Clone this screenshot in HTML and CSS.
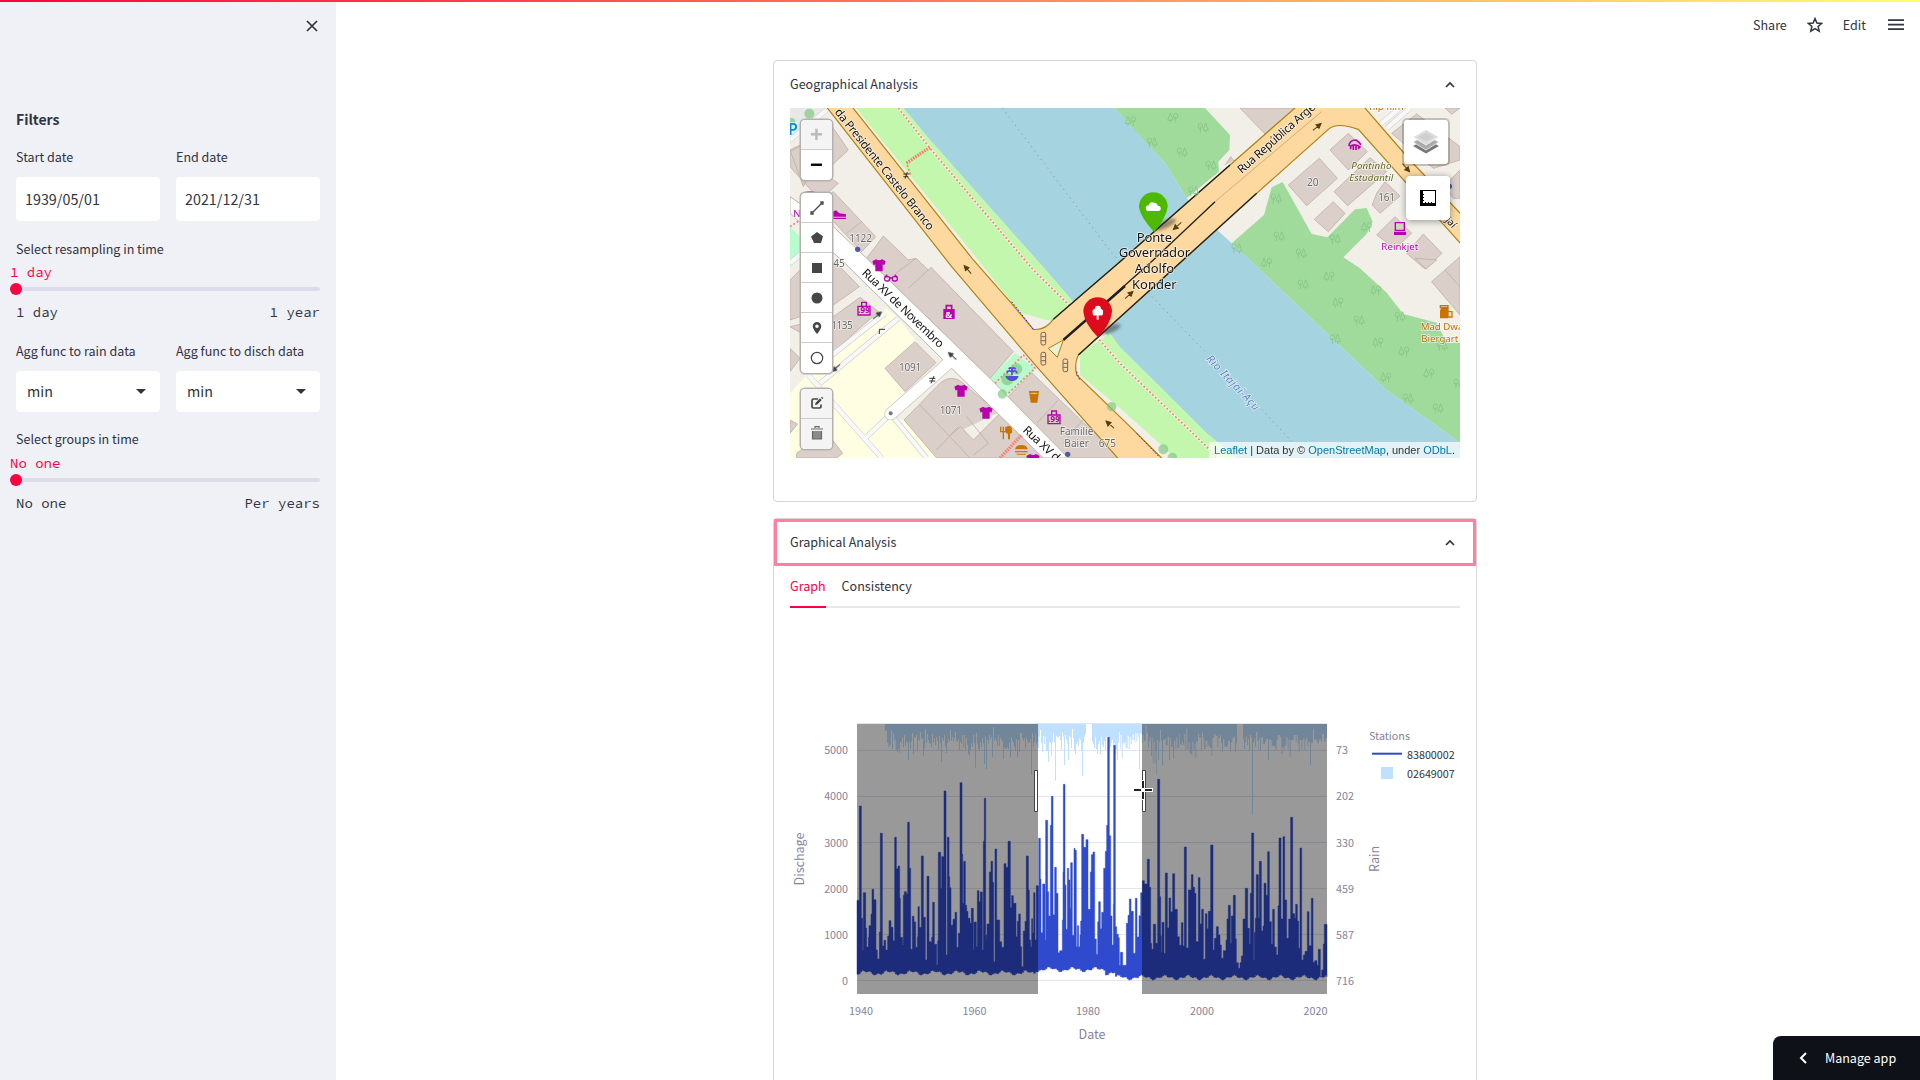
FILE: index.html
```html
<!DOCTYPE html>
<html lang="en">
<head>
<meta charset="utf-8">
<title>Hydrological analysis</title>
<link rel="stylesheet" href="styles.css">
</head>
<body>
<div class="topline"></div>
<div class="app">
  <aside class="sidebar">
    <div class="side-head"><svg width="14" height="14" viewBox="0 0 14 14"><path d="M2 2 12 12M12 2 2 12" stroke="#31333f" stroke-width="1.7"/></svg></div>
    <h3 class="filters">Filters</h3>
    <div class="pair">
      <div class="field"><label class="label">Start date</label><div class="input">1939/05/01</div></div>
      <div class="field"><label class="label">End date</label><div class="input">2021/12/31</div></div>
    </div>
    <div class="slider first">
      <label class="label">Select resampling in time</label>
      <div class="value">1 day</div>
      <div class="track"><i class="thumb"></i></div>
      <div class="ends"><span>1 day</span><span>1 year</span></div>
    </div>
    <div class="pair agg">
      <div class="field"><label class="label">Agg func to rain data</label><div class="select">min<i class="caret"></i></div></div>
      <div class="field"><label class="label">Agg func to disch data</label><div class="select">min<i class="caret"></i></div></div>
    </div>
    <div class="slider second">
      <label class="label">Select groups in time</label>
      <div class="value">No one</div>
      <div class="track"><i class="thumb"></i></div>
      <div class="ends"><span>No one</span><span>Per years</span></div>
    </div>
  </aside>

  <main class="main">
    <header class="toolbar">
      <span>Share</span>
      <svg class="star" width="16" height="16" viewBox="0 0 16 16"><path d="M8 1.6 9.9 6l4.8.4-3.6 3.1 1.1 4.7L8 11.7l-4.2 2.5 1.1-4.7L1.3 6.4 6.1 6Z" fill="none" stroke="#31333f" stroke-width="1.5"/></svg>
      <span class="edit">Edit</span>
      <svg class="burger" width="16" height="12" viewBox="0 0 16 12"><path d="M0 1.2H16M0 5.7H16M0 10.2H16" stroke="#31333f" stroke-width="1.7"/></svg>
    </header>

    <section class="card geo">
      <div class="card-head">Geographical Analysis<svg width="10" height="8" viewBox="0 0 10 8"><path d="M1 6 5 2 9 6" fill="none" stroke="#31333f" stroke-width="1.7"/></svg></div>
      <div class="map">
        <svg class="tiles" viewBox="60 174 2010 1050" width="670" height="350">
          <defs>
            <g id="trees" fill="none" stroke="#86c686" stroke-width="2.6"><ellipse cx="-8" cy="-6" rx="6.5" ry="8"/><path d="M-8-4V14M8-15 0 7H16ZM8 7V14"/></g>
            <g id="treesb"><use href="#trees" transform="scale(-1 1)"/></g>
            <path id="shirt" d="M-20-12-9-18Q0-12 9-18L20-12 16 0 11-3V18H-11V-3L-16 0Z" fill="#b900ad"/>
            <path id="arrow" d="M-16 0H8M16 0 2-7V7Z" stroke="#523f0a" stroke-width="3" fill="#523f0a"/>
            <g id="shop"><path d="M-18-6H18V20H-18ZM-7-6V-18H7V-6" fill="none" stroke="#b900ad" stroke-width="4"/><text x="-17" y="15" font-size="24" font-weight="700" fill="#b900ad">.99</text></g>
            <g id="signal" fill="none" stroke="#4b4b4b" stroke-width="2.4"><rect x="-7" y="-19" width="14" height="38" rx="5" fill="#fdd9a0"/><path d="M-6-6H6M-6 6H6"/></g>
          </defs>
          <rect x="60" y="174" width="2010" height="1050" fill="#f2efe9"/>
          <path fill="#e8e8e6" d="M60 174H172L120 230 60 280Z"/>
          <path fill="#a6d3e0" d="M400 174H1035L1190 345 1250 445 1345 543 1440 630 1850 1020 2070 1178V1224H1400L1310 1150 1050 892 907 752 827 660 480 270Z"/>
          <path fill="#a0db9c" d="M1035 174H1305L1380 255 1378 300 1345 335 1347 365 1250 445 1190 345 1080 225ZM1385 580 1482 495 1505 412 1538 396 1625 552 1672 562 1755 478 1790 474 1808 515 1790 552 1720 622 1770 655 1850 728 1900 792 2000 818 2030 878H2070V1178L1850 1020 1440 630Z"/>
          <path fill="#c3f7ad" d="M258 174H400L480 270 827 660 907 752 850 815 755 790 720 750 640 650ZM1020 850 1050 892 1310 1150 1400 1224H1215L1180 1190 1050 1075 930 975V910Z"/>
          <path fill="#fffee3" d="M350 775 385 805 440 875 345 955 405 1025 350 1095 400 1110 515 1224H60V1030L110 975 190 900Z"/>
          <path fill="#b8fbcc" d="M60 530 95 565V620L60 650ZM735 910 795 955 715 1035 660 985Z"/>
          <g fill="#dbd0c9" stroke="#c1b0a5" stroke-width="2.5">
            <path d="M60 305 190 235 235 300 160 370 205 400 150 450 60 350ZM60 300 190 235 100 410ZM190 425 317 560 275 605 140 460ZM230 550 275 515"/>
            <path d="M340 558 415 630 438 625 475 660 483 652 730 905 660 985 290 625ZM378 670 438 625M415 715 475 660"/>
            <path d="M60 690 100 650 200 640 268 710 190 765 60 810ZM190 800 270 742 325 785 190 905 60 830ZM60 895 90 925 60 965Z"/>
            <path d="M435 875 498 938 405 1025 345 955ZM402 1110 500 1010Q545 960 590 1010L850 1224H500ZM450 1065 600 1224M540 1157 572 1130 610 1170 700 1080M610 1215 655 1180M655 1180 590 1100M565 1130 500 1200"/>
            <path d="M785 968 940 1118 1065 1224H880L715 1040ZM800 1120 865 1050M880 1180 940 1108M60 1110 83 1122 60 1150ZM80 1210 165 1140 218 1210 200 1224H80Z"/>
            <path d="M1410 174H1575L1485 252ZM1735 250 1792 305 1735 360 1680 300ZM1648 325 1702 385 1610 467 1555 405ZM1800 323 1850 365 1733 467 1692 425ZM1845 395 1890 438 1830 490 1807 465 1820 430ZM1690 455 1725 490 1675 545 1633 508ZM1875 500 1925 550 1875 595 1820 555ZM1960 552 2016 610 1965 657 1910 610ZM1366 345 1382 320 1392 332"/>
            <path d="M1865 250 1940 192 2070 290V330L1990 355ZM2025 174H2070L2045 193ZM2020 410 2070 360V445H2050ZM1985 695 2070 620V795ZM1935 625 1968 657 2000 630ZM2025 660 2070 710"/>
          </g>
          <g fill="none" stroke-linejoin="round">
            <path d="M60 270 170 180M60 640 140 570M180 920 345 790M150 1000 385 805M115 975 335 1224M285 1165 362 1092 470 1224M1832 222 1890 174M1850 235 1920 174" stroke="#c9c9c9" stroke-width="16"/>
            <path d="M60 270 170 180M60 640 140 570M180 920 345 790M150 1000 385 805M115 975 335 1224M285 1165 362 1092 470 1224M1832 222 1890 174M1850 235 1920 174" stroke="#f8f8f8" stroke-width="13"/>
            <path d="M535 940 362 1092" stroke="#c9c3bd" stroke-width="38" stroke-linecap="round"/>
            <path d="M60 440 190 530 290 625 660 985 895 1224H820L545 955 225 640 60 490Z" fill="#fff" stroke="#bcb5ad" stroke-width="3"/>
            <path d="M535 940 362 1092" stroke="#fff" stroke-width="34" stroke-linecap="round"/>
            <path d="M385 174 480 295 790 660 907 775M980 860 1050 940 1310 1190 1340 1224" stroke="#ffffff" stroke-width="8" opacity=".6"/>
            <path d="M385 174 480 295 790 660 907 775M980 860 1050 940 1310 1190 1340 1224M675 1000 760 915 795 955 715 1030M60 530 90 510" stroke="#fa8072" stroke-width="5" stroke-dasharray="6 6"/>
            <path d="M690 1224 755 1155M480 292 408 340" stroke="#fa8072" stroke-width="10" stroke-dasharray="5 3"/>
            <path d="M412 345 422 375" stroke="#fa8072" stroke-width="5" stroke-dasharray="6 6"/>
            <path d="M697 174 1030 615 1070 655M1135 728 1310 910M1465 1067 1580 1190" stroke="#9a93c0" stroke-width="3" stroke-dasharray="4 12"/>
          </g>
          <path fill="#fdd9a0" stroke="#ac8110" stroke-width="3.5" d="M165 165 242 165 610 630 720 755 790 838Q825 842 850 808L1050 635 1380 345 1585 165H1777L1920 330 2080 500V590L1910 400 1765 238Q1700 215 1675 238L1460 430 925 915Q912 940 920 975L1080 1130 1185 1234H1052L800 950 545 650Z"/>
          <g fill="none" stroke="#202020">
            <path d="M850 808 1050 635 1380 345M925 915 1460 430" stroke-width="4"/>
            <path d="M880 870 1150 630M1150 630 1335 455" stroke-width="4"/><path d="M880 870 1065 708" stroke-width="7"/>
            <path d="M1335 455 1655 185" stroke="#b3996d" stroke-width="2"/>
            <path d="M725 755 790 838M920 965 930 993M1100 1150 1165 1218" stroke="#4a20d0" stroke-width="3" stroke-dasharray="5 5"/>
          </g>
          <path d="M880 870 862 922 835 895Z" fill="#e9f2d6" stroke="#ac8110" stroke-width="3"/>
          <g fill="#7bc67d" opacity=".65"><circle cx="118" cy="191" r="15"/><circle cx="64" cy="216" r="12"/><circle cx="740" cy="957" r="17"/><circle cx="712" cy="988" r="18"/><circle cx="697" cy="1032" r="14"/><circle cx="1025" cy="1070" r="14"/><circle cx="1180" cy="1198" r="15"/><circle cx="1207" cy="1222" r="14"/></g>
          <use href="#treesb" x="1082" y="214"/><use href="#treesb" x="1209" y="204"/><use href="#trees" x="1299" y="234"/><use href="#trees" x="1146" y="278"/><use href="#trees" x="1236" y="308"/><use href="#trees" x="1323" y="347"/><use href="#trees" x="1270" y="424"/><use href="#trees" x="1518" y="446"/><use href="#trees" x="1527" y="560"/><use href="#trees" x="1593" y="611"/><use href="#treesb" x="1790" y="532"/><use href="#trees" x="1695" y="568"/><use href="#treesb" x="1490" y="639"/><use href="#trees" x="1400" y="596"/>
          <use href="#trees" x="1599" y="704"/><use href="#treesb" x="1677" y="680"/><use href="#treesb" x="1704" y="758"/><use href="#trees" x="1767" y="812"/><use href="#treesb" x="1818" y="722"/><use href="#trees" x="1890" y="800"/><use href="#treesb" x="1824" y="878"/><use href="#trees" x="1695" y="868"/><use href="#treesb" x="1902" y="905"/><use href="#treesb" x="1848" y="983"/><use href="#treesb" x="1977" y="971"/><use href="#trees" x="1914" y="1046"/><use href="#trees" x="2004" y="1076"/><use href="#trees" x="2066" y="1001"/><use href="#trees" x="2016" y="888"/>
          <use href="#shirt" x="327" y="646"/><use href="#shirt" x="573" y="1022"/><use href="#shirt" x="648" y="1088"/><use href="#shirt" x="789" y="1230"/>
          <use href="#shop" x="282" y="775"/><use href="#shop" x="852" y="1101"/>
          <use href="#signal" x="820" y="866"/><use href="#signal" x="820" y="926"/><use href="#signal" x="886" y="946"/>
          <use href="#arrow" transform="translate(593 659) rotate(229)"/><use href="#arrow" transform="translate(1020 1124) rotate(222)"/><use href="#arrow" transform="translate(1077 735) rotate(-42)"/><use href="#arrow" transform="translate(1641 231) rotate(-40)"/><use href="#arrow" transform="translate(1222 528) rotate(138)"/><use href="#arrow" transform="translate(1908 353) rotate(48)"/>
          <g class="grey-arrows"><use href="#arrow" transform="translate(547 918) rotate(222)"/><use href="#arrow" transform="translate(322 796) rotate(-40)"/><use href="#arrow" transform="translate(198 954) rotate(140)"/></g>
          <path d="M328 838H345M328 838V852M478 985 496 985M478 993 496 993M483 1000 492 978M400 372H418M400 380H415M405 386 412 366" fill="none" stroke="#333" stroke-width="3"/>
          <g fill="#5158a8"><circle cx="263" cy="598" r="8"/><circle cx="893" cy="1213" r="8"/><circle cx="2038" cy="409" r="8"/></g><circle cx="362" cy="1090" r="6" fill="#777"/>
          <g fill="none" stroke="#b900ad" stroke-width="4"><rect x="344" y="680" width="15" height="13" rx="5"/><rect x="367" y="680" width="15" height="13" rx="5"/><path d="M344 682 352 674M382 682 374 674M359 684H367"/><path d="M1737 288Q1738 270 1758 270 1766 274 1773 284M1739 290Q1755 278 1772 292M1742 290V298M1750 287V300M1758 287V300M1766 290V298" stroke-width="5"/><path d="M1876 518H1903V541H1876Z"/></g>
          <path d="M1872 545H1908V555H1872ZM187 485 198 481 208 490 228 493V500H187ZM187 503H228V507H187ZM100 427Q120 420 140 427V435H100ZM520 777H554V807H520Z" fill="#b900ad"/>
          <path d="M529 777V767H545V777" stroke="#b900ad" stroke-width="5" fill="none"/>
          <text x="526" y="803" font-size="28" fill="#fff" font-weight="700">&amp;</text>
          <path d="M706 978H746Q742 993 727 993 711 993 706 978Z" fill="#5b49d8"/>
          <path d="M726 976V953M711 970Q713 958 725 965M741 970Q739 958 727 965M716 957Q724 950 726 958 728 950 737 957" stroke="#5b49d8" stroke-width="5" fill="none"/>
          <path d="M777 1023H807L802 1058H782ZM735 1198Q737 1185 754 1185 771 1185 773 1198ZM735 1203H773V1207H735ZM738 1211H770L765 1214H742ZM716 1128Q728 1128 726 1148L720 1152V1168H714V1152Q704 1148 706 1138 709 1128 716 1128ZM2014 770H2034V805H2010V782Z" fill="#cb7300"/>
          <path d="M782 1030H802" stroke="#dbd0c9" stroke-width="3"/>
          <path d="M692 1130V1145H708V1130M700 1130V1168M2036 785H2046V801H2036M2011 775V767H2034V803" stroke="#cb7300" stroke-width="4" fill="none"/>
          <g class="map-text">
            <g font-size="30" fill="#666"><text x="238" y="577" textLength="68">1122</text><text x="190" y="650">45</text><text x="184" y="836" textLength="64">1135</text><text x="387" y="963" textLength="67">1091</text><text x="509" y="1092" textLength="67">1071</text><text x="986" y="1190" textLength="52">675</text><text x="1611" y="408">20</text><text x="1825" y="454" textLength="50">161</text><text x="869" y="1156" textLength="101">Familie</text><text x="883" y="1192" textLength="74">Baier</text></g>
            <g font-size="29"><text x="1834" y="601" fill="#b900ad" textLength="111">Reinkjet</text><text x="70" y="500" fill="#b900ad">N</text><g fill="#c26a00"><text x="1952" y="840">Mad Dwa</text><text x="1954" y="876">Biergart</text><text x="1798" y="181">hip film</text></g><g fill="#5d6412" font-style="italic"><text x="1744" y="358" textLength="120">Pontinho</text><text x="1738" y="393" textLength="132">Estudantil</text></g></g>
            <g font-size="35" fill="#111">
              <text transform="translate(193 187) rotate(51.5)" textLength="455">da Presidente Castelo Branco</text>
              <text transform="translate(274 671) rotate(43.8)" textLength="324">Rua XV de Novembro</text>
              <text transform="translate(757 1143) rotate(43)" textLength="155">Rua XV de</text>
              <text transform="translate(1415 372) rotate(-41.5)" textLength="298">Rua República Arge</text>
              <text transform="translate(2025 512) rotate(48)" font-size="30">jaí</text>
              <g font-size="39" text-anchor="middle"><text x="1153" y="575" textLength="106">Ponte</text><text x="1153" y="622" textLength="214">Governador</text><text x="1153" y="669" textLength="118">Adolfo</text><text x="1153" y="716" textLength="134">Konder</text></g>
            </g>
            <text transform="translate(1307 928) rotate(46.5)" font-size="33" font-style="italic" fill="#5a7fc5" textLength="214">Rio Itajaí-Açu</text>
            <text x="54" y="255" font-size="48" font-weight="600" fill="#0092da">P</text>
          </g>
          <g><ellipse cx="1185" cy="524" rx="36" ry="11" transform="rotate(-25 1185 524)" fill="#333" opacity=".5" filter="blur(5px)"/><path d="M1107 470A43 43 0 1 1 1193 470Q1190 500 1153 546 1110 500 1107 470Z" fill="#4fb900"/><path d="M1130 482Q1122 468 1136 466 1140 452 1155 459 1163 460 1163 467 1174 467 1172 479L1167 483H1134Z" fill="#fff"/></g>
          <g><ellipse cx="1018" cy="838" rx="36" ry="11" transform="rotate(-20 1018 838)" fill="#333" opacity=".5" filter="blur(5px)"/><path d="M940 785A43 43 0 1 1 1026 785Q1023 820 984 862 943 820 940 785Z" fill="#dc0c1c"/><path d="M980 809V796Q967 799 968 788 965 779 974 777 975 767 984 767 993 767 993 777 1001 779 999 788 1000 799 986 796V809Z" fill="#fff"/></g>
        </svg>
        <div class="bar zoom"><b class="off">+</b><b>−</b></div>
        <div class="bar draw">
          <b><svg viewBox="0 0 14 14"><path d="M3 11 11 3M1 11H3V13H1ZM11 1H13V3H11Z" fill="none" stroke="#464646" stroke-width="1.3"/></svg></b>
          <b><svg viewBox="0 0 14 14"><path d="M7 1 13 5.2 11 12H4L1 5.5Z" fill="#464646"/></svg></b>
          <b><svg viewBox="0 0 14 14"><path d="M2 2H12V12H2Z" fill="#464646"/></svg></b>
          <b><svg viewBox="0 0 14 14"><circle cx="7" cy="7" r="5.5" fill="#464646"/></svg></b>
          <b><svg viewBox="0 0 14 14"><path d="M7 1A4.3 4.3 0 0 1 11.3 5.3Q11 8.5 7 13 3 8.500 2.700 5.300A4.300 4.300 0 0 1 7 1ZM7 3.500A1.800 1.800 0 1 0 7 7.100 1.800 1.800 0 0 0 7 3.500Z" fill="#464646" fill-rule="evenodd"/></svg></b>
          <b><svg viewBox="0 0 14 14"><circle cx="7" cy="7" r="5.700" fill="none" stroke="#464646" stroke-width="1.200"/></svg></b>
        </div>
        <div class="bar modify">
          <b class="off"><svg viewBox="0 0 14 14"><path d="M8 3H3.500Q2 3 2 4.500V10.500Q2 12 3.500 12H9.500Q11 12 11 10.500V8.500" fill="none" stroke="#464646" stroke-width="1.700"/><path d="M5 9 5.600 6.700 10 2.300 11.700 4 7.300 8.400ZM11 1.500 12 .7 13.300 2 12.500 3Z" fill="#464646"/></svg></b>
          <b class="off"><svg viewBox="0 0 14 14"><path d="M2.500 5H11.500V13H2.500Z" fill="#8b8b8b"/><path d="M1 3H13M5 2V.7H9V2M2.500 5V13H11.500V5" fill="none" stroke="#666" stroke-width="1.200"/></svg></b>
        </div>
        <div class="layers"><svg width="28" height="28" viewBox="0 0 28 28"><path d="M1 18 14 11 27 18 14 25.500Z" fill="#777"/><path d="M1 14 14 7 27 14 14 22Z" fill="#aaa" stroke="#fff" stroke-width=".7"/><path d="M1 9 14 1.500 27 9 14 17Z" fill="#ddd" stroke="#fff" stroke-width=".7"/><path d="M6 9 14 4.500 22 9 14 13.500Z" fill="#cfcfcf"/></svg></div>
        <div class="measure"><svg width="16" height="16" viewBox="0 0 16 16"><path d="M0 0H3V13H16V16H0Z" fill="#000"/><path d="M3 .5H16M15.500 1V13M5.500 12V13M8.500 12V13M11.500 12V13M3 4.500H4M3 7.500H4M3 10.500H4" fill="none" stroke="#000"/></svg></div>
        <div class="credit"><a>Leaflet</a> | Data by © <a>OpenStreetMap</a>, under <a>ODbL</a>.</div>
      </div>
    </section>

    <section class="card graph">
      <div class="card-head focus">Graphical Analysis<svg width="10" height="8" viewBox="0 0 10 8"><path d="M1 6 5 2 9 6" fill="none" stroke="#31333f" stroke-width="1.700"/></svg></div>
      <nav class="tabs"><span class="active">Graph</span><span>Consistency</span></nav>
      <svg class="chart" viewBox="790 700 670 360" width="670" height="360">
        <path d="M857 723.500H1327M857 750.500H1327M857 796.500H1327M857 842.500H1327M857 888.500H1327M857 934.500H1327M857 980.500H1327" stroke="#e3e5f0"/>
        <g transform="translate(780 710) scale(.33333)">
          <path id="rain" fill="#bfe0ff"/>
          <path id="flow" fill="#2f4acd" stroke="#2f4acd" stroke-opacity=".5" stroke-width="3"/>
        </g>
        <path d="M857 724H1038V994H857ZM1142 724H1327V994H1142Z" fill="#000" fill-opacity=".4"/>
        <path d="M1034.500 770.500H1037.500V811.500H1034.500ZM1142.500 770.500H1145.500V811.500H1142.500Z" fill="#fff" stroke="#444"/>
        <path d="M1133 790H1153M1143 780V800" stroke="#fff" stroke-width="4"/><path d="M1134 790H1141M1145 790H1152M1143 781V788M1143 792V799" stroke="#222" stroke-width="2"/>
        <g class="axis" text-anchor="end"><text x="848" y="754">5000</text><text x="848" y="800">4000</text><text x="848" y="846.500">3000</text><text x="848" y="892.500">2000</text><text x="848" y="938.500">1000</text><text x="848" y="984.500">0</text></g>
        <g class="axis"><text x="1336" y="754">73</text><text x="1336" y="800">202</text><text x="1336" y="846.500">330</text><text x="1336" y="892.500">459</text><text x="1336" y="938.500">587</text><text x="1336" y="984.500">716</text></g>
        <g class="axis" text-anchor="middle"><text x="861" y="1015">1940</text><text x="974.500" y="1015">1960</text><text x="1088" y="1015">1980</text><text x="1202" y="1015">2000</text><text x="1315.500" y="1015">2020</text></g>
        <g class="title" text-anchor="middle"><text x="1092" y="1039">Date</text><text transform="translate(804 859) rotate(-90)">Dischage</text><text transform="translate(1379 859) rotate(-90)">Rain</text></g>
        <text class="axis" x="1369" y="740">Stations</text>
        <path d="M1372 753.700H1402" stroke="#2f4acd" stroke-width="2"/><path d="M1381 767H1393V779H1381Z" fill="#bfe0ff"/>
        <g class="legend"><text x="1407" y="759">83800002</text><text x="1407" y="778">02649007</text></g>
      </svg>
    </section>
  </main>
</div>
<div class="manage"><svg width="8" height="12" viewBox="0 0 8 12"><path d="M7 1 2 6 7 11" fill="none" stroke="#fff" stroke-width="2"/></svg>Manage app</div>
<script src="script.js"></script>
</body>
</html>
```

FILE: styles.css
```css
* { box-sizing: border-box; }
body {
  margin: 0;
  height: 1080px;
  overflow: hidden;
  background: #fff;
  color: #31333f;
  /* The Latin glyphs of this family are about 1.117 times wider per em than those of Source Sans. */
  font-family: "Source Sans Pro", "Noto Sans CJK JP", "Noto Sans", sans-serif;
  font-size: 12.54px;
  line-height: 20px;
}
.topline { position: absolute; inset: 0 0 auto; height: 2px; background: linear-gradient(90deg, #ff0040, #fcff70); z-index: 2; }
.app { display: flex; height: 1080px; }

.sidebar { flex: 0 0 336px; background: #f0f1f6; padding: 0 16px; }
.side-head { display: flex; justify-content: flex-end; padding: 19px 1px 0 0; height: 109px; }
.filters { margin: 0; font-size: 14px; font-weight: 700; line-height: 20px; height: 38px; }
.pair { display: grid; grid-template-columns: 1fr 1fr; gap: 16px; }
.label { display: block; height: 20px; white-space: nowrap; }
.input, .select { background: #fff; border-radius: 4px; font-size: 14.33px; display: flex; align-items: center; }
.input { height: 44px; margin-top: 10px; padding: 0 9px 1px; }
.agg { padding-top: 19px; }
.select { height: 41px; margin-top: 10px; padding: 0 14px 1px 11px; justify-content: space-between; }
.caret { border: 5px solid transparent; border-top: 5px solid #31333f; border-bottom: 0; }
.slider.first { padding-top: 18px; }
.slider.second { padding-top: 17px; }
.value, .ends { font-family: "Source Code Pro", "Liberation Mono", monospace; font-size: 14px; height: 20px; }
.value { color: #ff0040; margin: 3px 0 0 -6px; }
.second .value { margin-top: 4px; }
.track { height: 4px; margin-top: 5px; background: #dadcea; border-radius: 2px; display: flex; align-items: center; }
.thumb { width: 12px; height: 12px; margin-left: -6px; border-radius: 50%; background: #ff0040; }
.ends { display: flex; justify-content: space-between; margin-top: 11px; }

.main { flex: 1; display: flex; flex-direction: column; align-items: center; padding-right: 6px; }
.toolbar { align-self: stretch; height: 60px; flex: none; display: flex; align-items: flex-start; justify-content: flex-end; padding: 15px 10px 0 0; }
.star { margin: 2px 20px 0 20px; }
.edit { margin-right: 22px; }
.burger { margin-top: 4px; }
.card { width: 704px; flex: none; border: 1px solid #d6d6d9; border-radius: 4px; }
.card-head { display: flex; justify-content: space-between; align-items: center; height: 47px; padding: 0 21px 1px 16px; }
.card-head svg { margin-top: 1px; }
.geo { height: 442px; }
.graph { margin-top: 16px; height: 600px; }
.focus { border: 3px solid #ff809f; padding: 0 18px 1px 13px; }
.tabs { display: flex; gap: 16px; margin: 0 16px; height: 42px; box-shadow: inset 0 -2px #e8e8ea; }
.tabs span { height: 42px; padding-top: 10px; }
.tabs .active { color: #ff0040; border-bottom: 2px solid #ff0040; }
.chart { display: block; margin: 92px 0 0 16px; }
.axis { font-size: 10.75px; fill: #85839a; }
.title { font-size: 12.54px; fill: #85839a; }
.legend { font-size: 10.75px; fill: #31333f; }

.map { position: relative; width: 670px; height: 350px; margin-left: 16px; overflow: hidden; }
.tiles { display: block; font-family: "Noto Sans", sans-serif; }
.map-text text { paint-order: stroke; stroke: rgba(255, 255, 255, .75); stroke-width: 4px; }
.grey-arrows { filter: grayscale(1); }
.bar { position: absolute; left: 11px; width: 31px; border-radius: 4px; box-shadow: 0 0 0 1.5px #b3b0ad; background: #fff; overflow: hidden; }
.bar b { display: flex; align-items: center; justify-content: center; height: 30px; border-bottom: 1px solid #ccc; font: 700 22px "Liberation Sans", sans-serif; color: #000; }
.bar b:last-child { border-bottom: 0; }
.bar b.off { background: #f4f4f4; color: #bbb; }
.bar svg { width: 14px; height: 14px; }
.zoom { top: 12px; }
.draw { top: 85px; }
.modify { top: 281px; }
.modify svg { margin-bottom: 2px; }
.layers, .measure { position: absolute; display: flex; align-items: center; justify-content: center; background: #fff; }
.layers { left: 612px; top: 10px; width: 48px; height: 48px; border: 2px solid rgba(0, 0, 0, .2); border-radius: 5px; background-clip: padding-box; }
.measure { left: 616px; top: 68px; width: 44px; height: 44px; border-radius: 4px; box-shadow: 0 1px 7px rgba(0, 0, 0, .4); }
.credit { position: absolute; right: 0; bottom: 0; height: 16px; padding: 0 5px; background: rgba(255, 255, 255, .7); font: 11px/16px "Liberation Sans", sans-serif; color: #333; white-space: nowrap; }
.credit a { color: #0078a8; }

.manage { position: absolute; right: 0; bottom: 0; width: 147px; height: 44px; display: flex; align-items: center; gap: 18px; padding-left: 26px; background: #0e1117; color: #fff; border-radius: 8px 0 0 0; font-size: 12.54px; }
```

FILE: script.js
```js
// Step series as x, y pairs; both halves share one grid, the second starts 1020 units further right.
const rainA = [315,62,321,98,325,110,329,104,333,62,336,116,339,70,342,92,345,88,347,122,351,126,354,116,357,128,360,96,363,100,366,84,369,112,372,75,375,108,378,94,381,98,384,150,387,95,390,118,393,95,396,70,399,132,402,82,408,75,411,124,414,88,417,92,420,66,423,88,426,84,429,137,432,116,435,58,438,98,441,72,444,90,447,98,450,102,453,110,456,72,459,98,462,85,465,106,468,80,471,92,474,122,477,78,480,100,483,156,486,85,489,92,492,75,495,110,498,129,501,100,504,86,507,94,510,60,513,92,516,80,519,94,522,85,525,66,528,92,531,96,534,88,537,120,540,95,543,102,546,75,549,112,552,75,555,120,558,84,561,104,564,132,567,137,570,120,573,100,576,110,579,75,582,100,585,173,588,68,591,100,594,117,597,124,600,96,603,112,606,84,609,100,612,162,615,80,618,177,621,90,624,100,627,75,630,88,633,80,636,140,639,52,642,92,645,85,648,92,651,108,654,75,657,108,660,84,663,90,666,95,669,147,672,112,675,116,681,112,684,118,687,98,690,142,693,82,696,92,699,98,702,110,705,124,708,88,711,142,714,90,717,126,720,68,726,85,729,92,732,85,735,116,738,85,741,92,744,98,750,88,753,194,756,70,759,112,762,96,765,72,768,104,771,96,774,114,777,80,780,60,783,98,786,125,789,78,792,102,795,80,798,123,804,155,807,95,810,98,813,137,816,95,819,68,822,98,825,212,828,78,831,82,837,78,840,90,843,120,846,68,849,80,852,165,855,75,858,88,861,102,864,150,867,78,870,82,873,114,876,56,879,84,882,122,885,132,888,102,891,96,894,108,897,85,900,90,903,124,906,197,909,98,912,80,915,72,918,42,936,95,939,103,942,114,945,80,948,118,951,132,954,102,957,92,960,134,963,80,966,105,969,112,972,94,975,120,978,80,984,90,987,122,990,110,993,98,996,90,999,104,1002,100,1005,130,1008,118,1011,150,1014,98,1017,66,1020,118];
const rainB = [2,75,5,143,8,98,11,102,14,96,17,115,23,78,26,117,29,82,32,102,35,90,38,72,41,90,44,98,46,70,49,95,52,70,55,82,57,176,60,70,65,100,68,75,71,92,77,46,80,70,84,113,87,92,90,82,93,137,96,85,98,160,101,95,104,162,107,120,109,195,111,90,114,150,117,95,120,60,123,92,126,167,129,90,134,85,137,106,143,80,147,150,150,84,153,110,159,146,162,92,166,118,169,82,172,114,178,72,180,104,186,95,189,106,193,72,196,120,199,55,202,118,206,98,209,130,214,136,217,95,220,122,224,100,226,145,229,95,234,72,237,82,243,122,246,68,249,85,252,118,257,92,262,110,265,104,268,112,274,137,277,84,282,72,286,78,292,112,295,85,300,75,303,100,306,126,309,88,313,110,319,112,322,104,325,92,330,126,333,98,337,85,340,80,345,127,348,100,351,42,369,88,372,118,375,96,378,80,381,105,384,88,387,122,390,75,393,82,396,312,399,98,402,86,405,110,408,65,412,92,415,120,417,85,420,122,423,82,429,102,435,95,438,86,444,150,447,88,450,90,455,108,464,110,467,120,470,90,473,75,479,82,484,132,487,112,491,124,494,106,499,82,503,118,506,88,509,142,512,90,521,75,527,95,530,75,533,100,536,125,539,90,544,118,547,90,550,85,553,120,556,90,559,82,562,108,565,96,570,165,573,98,579,58,582,88,588,92,592,100,597,88,603,95,606,72,612,94,617,84,621,42];
const flowA = [231,571,238,288,244,625,248,720,250,548,257,654,260,711,265,682,267,647,273,612,276,538,281,569,288,720,292,747,298,666,301,370,307,708,312,691,317,720,323,678,327,632,333,652,339,692,344,382,349,476,354,468,359,565,361,682,368,705,370,556,373,545,379,552,383,337,388,475,392,718,397,619,402,636,407,712,412,680,414,590,418,652,424,438,430,622,436,750,441,499,447,695,453,697,455,682,458,577,463,703,470,765,473,692,475,427,482,535,485,440,492,243,498,735,502,382,507,500,509,533,513,646,519,628,525,607,530,712,535,670,540,218,546,432,548,580,551,454,556,586,560,604,564,625,570,640,574,595,580,720,582,636,589,710,592,542,597,575,601,546,607,720,610,394,613,265,617,675,620,690,621,642,628,486,633,454,638,517,641,755,645,417,650,630,659,695,665,712,672,461,678,472,684,394,691,593,695,557,700,580,708,680,712,634,716,612,721,710,725,770,730,663,735,634,739,438,745,540,748,690,752,710,755,626,758,668,761,548,765,690,769,527,776,385,781,507,783,668,788,522,795,690,797,331,803,545,806,618,811,346,814,259,819,614,824,472,829,550,834,728,839,722,847,630,849,485,850,223,855,525,858,658,862,475,866,510,870,595,872,458,877,676,882,415,885,421,889,710,892,647,896,710,900,675,902,633,905,373,911,412,918,389,924,598,931,486,934,434,939,426,944,687,949,733,953,635,956,575,961,656,965,607,971,475,976,424,980,346,983,82,988,377,992,618,996,705,1000,583,1001,106,1006,650,1010,673,1015,683,1018,766];
const flowB = [1,727,8,766,19,640,24,616,28,567,33,604,40,730,46,565,51,681,57,617,62,548,67,512,73,522,82,448,88,532,92,700,95,718,100,643,107,700,113,208,119,560,122,677,124,727,126,637,132,730,136,489,142,654,147,564,152,605,158,491,164,598,172,680,178,706,184,638,189,708,193,411,199,714,205,540,214,494,219,532,224,550,228,695,235,503,240,642,245,598,250,748,256,611,261,656,265,604,272,405,279,720,283,685,289,650,295,675,300,705,304,745,310,722,318,690,321,627,325,586,331,700,334,618,340,556,346,686,349,758,355,775,360,758,364,738,369,627,376,535,383,655,388,702,391,550,395,369,401,750,403,667,406,625,409,494,415,623,418,454,424,663,429,648,432,520,438,556,443,425,448,635,454,702,458,598,463,711,469,735,474,587,477,384,483,627,489,380,494,570,500,685,506,627,512,322,518,611,524,625,527,583,532,633,536,715,540,414,545,750,550,735,555,724,562,605,567,707,574,565,579,757,584,752,591,766,595,718,601,800,605,780,610,702,613,643,620,643];

const joined = (a, b) => {
  const all = a.concat(b.map((v, i) => (i % 2 ? v : v + 1020)));
  const points = [];
  for (let i = 0; i < all.length; i += 2) points.push([all[i], all[i + 1]]);
  return points;
};
const steps = points => points.map(([x, y]) => `H${x}V${y}`).join("");

document.getElementById("rain").setAttribute("d", `M315 42${steps(joined(rainA, rainB))}H1641V42Z`);

// Lower envelope of the discharge line: the yearly low flow.
const lows = [];
for (let x = 1641; x >= 231; x -= 5) {
  const level = x > 1010 ? 802 : x > 980 ? 787 : x > 770 ? 778 : 788;
  lows.push(`H${x}V${level + Math.round(5 * Math.sin(x / 11) + 3 * Math.sin(x / 3.7))}`);
}
document.getElementById("flow").setAttribute("d", `M231 790${steps(joined(flowA, flowB))}H1641V800${lows.join("")}Z`);
```
